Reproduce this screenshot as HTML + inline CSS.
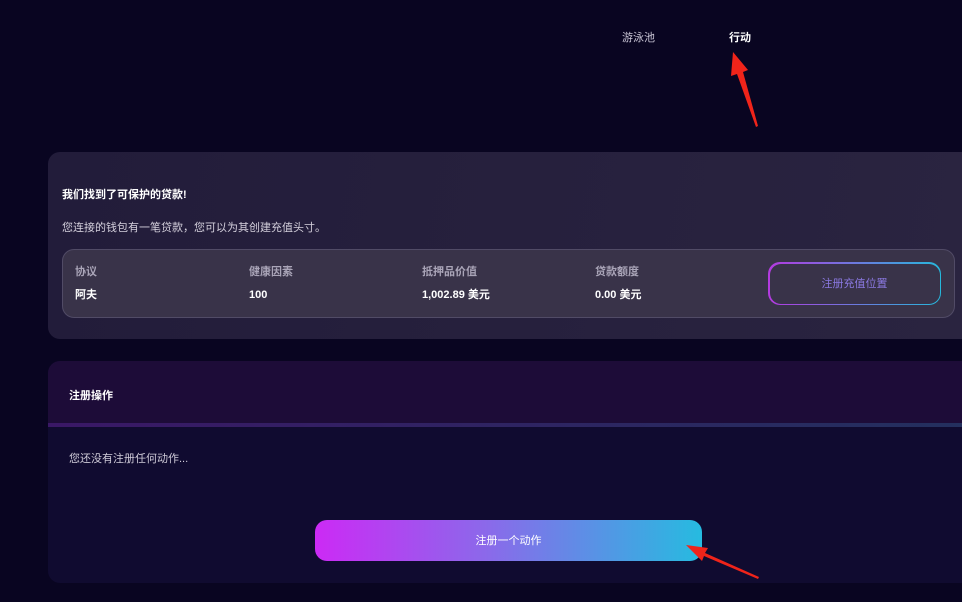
<!DOCTYPE html>
<html><head><meta charset="utf-8"><style>
*{margin:0;padding:0;box-sizing:border-box}
body{width:962px;height:602px;background:#090521;overflow:hidden;position:relative;font-family:"Liberation Sans","Noto Sans CJK SC",sans-serif;color:#fff}
.a{position:absolute;white-space:nowrap;line-height:14px}
</style></head><body>
<div class="a" style="left:622px;top:31px;font-size:11px;color:#c8c4d4">游泳池</div>
<div class="a" style="left:729px;top:31px;font-size:11px;font-weight:bold;color:#fff">行动</div>

<div class="a" style="left:48px;top:152px;width:930px;height:187px;border-radius:12px;background:linear-gradient(100deg,#221c3a,#2a2440)"></div>
<div class="a" style="left:62px;top:188px;font-size:11px;font-weight:bold">我们找到了可保护的贷款!</div>
<div class="a" style="left:62px;top:221px;font-size:11px;color:#d4d0dc">您连接的钱包有一笔贷款，您可以为其创建充值头寸。</div>
<div class="a" style="left:62px;top:249px;width:893px;height:69px;border-radius:12px;background:#393349;border:1px solid #514b66"></div>
<div class="a" style="left:75px;top:265px;font-size:11px;color:#aaa5b8;font-weight:bold">协议</div>
<div class="a" style="left:75px;top:288px;font-size:11px;font-weight:bold">阿夫</div>
<div class="a" style="left:249px;top:265px;font-size:11px;color:#aaa5b8;font-weight:bold">健康因素</div>
<div class="a" style="left:249px;top:288px;font-size:11px;font-weight:bold">100</div>
<div class="a" style="left:422px;top:265px;font-size:11px;color:#aaa5b8;font-weight:bold">抵押品价值</div>
<div class="a" style="left:422px;top:288px;font-size:11px;font-weight:bold">1,002.89 美元</div>
<div class="a" style="left:595px;top:265px;font-size:11px;color:#aaa5b8;font-weight:bold">贷款额度</div>
<div class="a" style="left:595px;top:288px;font-size:11px;font-weight:bold">0.00 美元</div>
<div class="a" style="left:768px;top:262px;width:173px;height:43px;border-radius:12px;padding:1.5px;background:linear-gradient(90deg,#b43ae0,#26b8dc)"><div style="width:100%;height:100%;border-radius:11px;background:#393349;display:flex;align-items:center;justify-content:center;font-size:11px;color:#8a78e0">注册充值位置</div></div>

<div class="a" style="left:48px;top:361px;width:930px;height:222px;border-radius:12px;background:#100b30;overflow:hidden">
 <div style="height:62px;background:#1d0c38"></div>
 <div style="height:4px;background:linear-gradient(90deg,#3a1866,#23305e)"></div>
</div>
<div class="a" style="left:69px;top:389px;font-size:11px;font-weight:bold">注册操作</div>
<div class="a" style="left:69px;top:452px;font-size:11px;color:#cfcbd8">您还没有注册任何动作...</div>
<div class="a" style="left:315px;top:520px;width:387px;height:41px;border-radius:12px;background:linear-gradient(90deg,#cc2af5,#8a6aea 45%,#26bbe0);display:flex;align-items:center;justify-content:center;font-size:11px">注册一个动作</div>

<svg class="a" style="left:0;top:0" width="962" height="602">
 <polygon points="758,126 743,72 748,70 733,52 731,76 737,74 756,127" fill="#f0241a"/>
 <polygon points="759,577 705,553 708,548 686,545 702,561 704,556 758,579" fill="#f0241a"/>
</svg>
</body></html>
